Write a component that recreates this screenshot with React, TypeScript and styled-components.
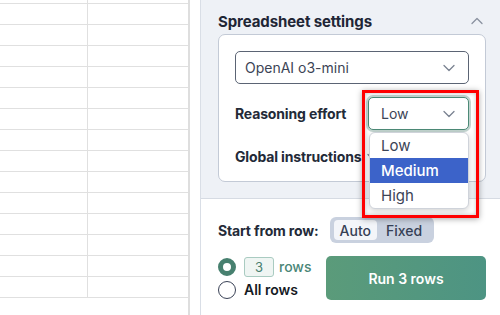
import React from "react";
import styled, { createGlobalStyle } from "styled-components";

const Global = createGlobalStyle`
  html, body { margin: 0; padding: 0; background: #fff; }
  body { font-family: Inter, "Noto Sans", sans-serif; }
  * { box-sizing: border-box; }
`;

const Page = styled.div`
  display: flex;
  width: 500px;
  height: 315px;
  overflow: hidden;
  background: #fff;
`;

const Sheet = styled.div`
  width: 190px;
  flex: none;
  border-right: 2px solid #dedede;
  overflow: hidden;
`;

const SheetBody = styled.div`
  margin-top: -17px;
  display: flex;
  flex-direction: column;
`;

const SheetRow = styled.div`
  display: grid;
  grid-template-columns: 88px 1fr;
  height: 21px;
  border-bottom: 1px solid #e0e0e0;
`;

const SheetCell = styled.div<{ $first?: boolean }>`
  border-right: ${(p) => (p.$first ? "1px solid #e0e0e0" : "none")};
`;

const Gutter = styled.div`
  width: 10px;
  flex: none;
`;

const Panel = styled.div`
  flex: 1;
  display: flex;
  flex-direction: column;
  border-left: 1px solid #d9dee6;
`;

const SettingsSection = styled.section`
  background: #eef1f6;
  padding: 11px 17px 16px 17px;
  border-bottom: 1px solid #d6dbe3;
`;

const TitleRow = styled.div`
  display: flex;
  align-items: center;
  justify-content: space-between;
  height: 20px;
`;

const Title = styled.h2`
  margin: 0;
  font-size: 15px;
  font-weight: 700;
  color: #1f2635;
  letter-spacing: -0.1px;
`;

const Card = styled.div`
  margin-top: 3px;
  margin-right: -3px;
  background: #fff;
  border: 1px solid #c3cad6;
  border-radius: 7px;
  padding: 16px 16px 11px 16px;
  display: flex;
  flex-direction: column;
  gap: 13px;
`;

const SelectBox = styled.div<{ $focused?: boolean; $width?: number }>`
  position: relative;
  height: 33px;
  width: ${(p) => (p.$width ? `${p.$width}px` : "100%")};
  border: 1px solid ${(p) => (p.$focused ? "#4c8a77" : "#5b6474")};
  border-radius: 5px;
  box-shadow: ${(p) => (p.$focused ? "0 0 0 2px rgba(120, 160, 148, 0.45)" : "none")};
  display: flex;
  align-items: center;
  justify-content: space-between;
  padding: 0 13px 0 ${(p) => (p.$focused ? "12px" : "9px")};
  font-size: 14px;
  color: #3c4456;
  background: #fff;
`;

const FieldRow = styled.div<{ $h?: number }>`
  display: flex;
  align-items: center;
  justify-content: space-between;
  height: ${(p) => (p.$h ? `${p.$h}px` : "33px")};
`;

const Label = styled.span`
  font-size: 14px;
  font-weight: 700;
  color: #232a38;
  white-space: nowrap;
  letter-spacing: -0.15px;
`;

const Menu = styled.ul`
  position: absolute;
  top: 34px;
  left: 0px;
  width: 100px;
  margin: 0;
  padding: 0;
  list-style: none;
  background: #fff;
  border: 1px solid #cfd3da;
  border-radius: 6px;
  box-shadow: 0 2px 6px rgba(0, 0, 0, 0.18);
  overflow: hidden;
  z-index: 2;
`;

const MenuItem = styled.li<{ $active?: boolean }>`
  height: 25px;
  display: flex;
  align-items: center;
  padding-left: 11px;
  font-size: 15px;
  color: ${(p) => (p.$active ? "#fff" : "#3c4456")};
  background: ${(p) => (p.$active ? "#3c63c9" : "transparent")};
  font-weight: ${(p) => (p.$active ? 500 : 400)};
`;

const Highlight = styled.div`
  position: absolute;
  left: -7px;
  top: -8px;
  width: 117px;
  height: 128px;
  border: 3px solid #f00;
  box-shadow: 0 1px 6px rgba(0, 0, 0, 0.35), inset 0 0 4px rgba(0, 0, 0, 0.25);
  pointer-events: none;
  z-index: 3;
`;

const LabelGroup = styled.div`
  display: flex;
  align-items: center;
  gap: 6px;
`;

const RunSection = styled.section`
  padding: 18px 14px 0 17px;
  display: flex;
  flex-direction: column;
  gap: 13px;
`;

const StartRow = styled.div`
  display: flex;
  align-items: center;
  gap: 11px;
`;

const Segmented = styled.div`
  display: flex;
  align-items: center;
  height: 26px;
  padding: 3px 3px 3px 4px;
  background: #c9d1df;
  border-radius: 6px;
`;

const Segment = styled.span<{ $on?: boolean }>`
  height: 20px;
  display: flex;
  align-items: center;
  padding: 0 ${(p) => (p.$on ? "6px" : "9px")};
  border-radius: 4px;
  background: ${(p) => (p.$on ? "#f3f5f9" : "transparent")};
  font-size: 14px;
  font-weight: 500;
  color: #364055;
`;

const BottomRow = styled.div`
  display: flex;
  align-items: center;
  justify-content: space-between;
`;

const RadioGroup = styled.div`
  display: flex;
  flex-direction: column;
  gap: 3px;
`;

const RadioLine = styled.label`
  display: flex;
  align-items: center;
  gap: 8px;
  height: 20px;
`;

const Radio = styled.span<{ $on?: boolean }>`
  width: 18px;
  height: 18px;
  border-radius: 50%;
  box-sizing: border-box;
  border: ${(p) => (p.$on ? "5px solid #47806f" : "1.5px solid #3a4256")};
  background: #fff;
`;

const CountBox = styled.span`
  width: 30px;
  height: 20px;
  border: 1px solid #a9cbc1;
  border-radius: 3px;
  background: #eff5f3;
  color: #47806f;
  font-size: 13px;
  display: flex;
  align-items: center;
  justify-content: center;
`;

const RowsText = styled.span<{ $teal?: boolean }>`
  font-size: 14px;
  font-weight: ${(p) => (p.$teal ? 500 : 600)};
  color: ${(p) => (p.$teal ? "#4a8677" : "#151a24")};
  margin-left: ${(p) => (p.$teal ? "-3px" : "0")};
`;

const RunButton = styled.button`
  width: 160px;
  height: 44px;
  border: none;
  border-radius: 5px;
  background: linear-gradient(90deg, #5b9b7a, #4d9483);
  color: #fff;
  font-family: inherit;
  font-size: 14px;
  font-weight: 600;
`;

const Chevron = ({ up, color = "#7a8291" }: { up?: boolean; color?: string }) => (
  <svg width="12" height="8" viewBox="0 0 12 8" fill="none">
    <path
      d={up ? "M1 6.5 L6 1.5 L11 6.5" : "M1 1.5 L6 6.5 L11 1.5"}
      stroke={color}
      strokeWidth="1.3"
      strokeLinecap="round"
      strokeLinejoin="round"
    />
  </svg>
);

export default function App() {
  const rows = Array.from({ length: 15 });
  return (
    <>
      <Global />
      <Page>
        <Sheet>
          <SheetBody>
            {rows.map((_, i) => (
              <SheetRow key={i}>
                <SheetCell $first />
                <SheetCell />
              </SheetRow>
            ))}
          </SheetBody>
        </Sheet>
        <Gutter />
        <Panel>
          <SettingsSection>
            <TitleRow>
              <Title>Spreadsheet settings</Title>
              <Chevron up color="#8a92a0" />
            </TitleRow>
            <Card>
              <SelectBox>
                <span>OpenAI o3-mini</span>
                <Chevron />
              </SelectBox>
              <FieldRow>
                <Label>Reasoning effort</Label>
                <SelectBox $focused $width={101}>
                  <span>Low</span>
                  <Chevron />
                  <Menu>
                    <MenuItem>Low</MenuItem>
                    <MenuItem $active>Medium</MenuItem>
                    <MenuItem>High</MenuItem>
                  </Menu>
                  <Highlight />
                </SelectBox>
              </FieldRow>
              <FieldRow $h={27}>
                <LabelGroup>
                  <Label>Global instructions</Label>
                  <Chevron />
                </LabelGroup>
              </FieldRow>
            </Card>
          </SettingsSection>
          <RunSection>
            <StartRow>
              <Label>Start from row:</Label>
              <Segmented>
                <Segment $on>Auto</Segment>
                <Segment>Fixed</Segment>
              </Segmented>
            </StartRow>
            <BottomRow>
              <RadioGroup>
                <RadioLine>
                  <Radio $on />
                  <CountBox>3</CountBox>
                  <RowsText $teal>rows</RowsText>
                </RadioLine>
                <RadioLine>
                  <Radio />
                  <RowsText>All rows</RowsText>
                </RadioLine>
              </RadioGroup>
              <RunButton>Run 3 rows</RunButton>
            </BottomRow>
          </RunSection>
        </Panel>
      </Page>
    </>
  );
}
